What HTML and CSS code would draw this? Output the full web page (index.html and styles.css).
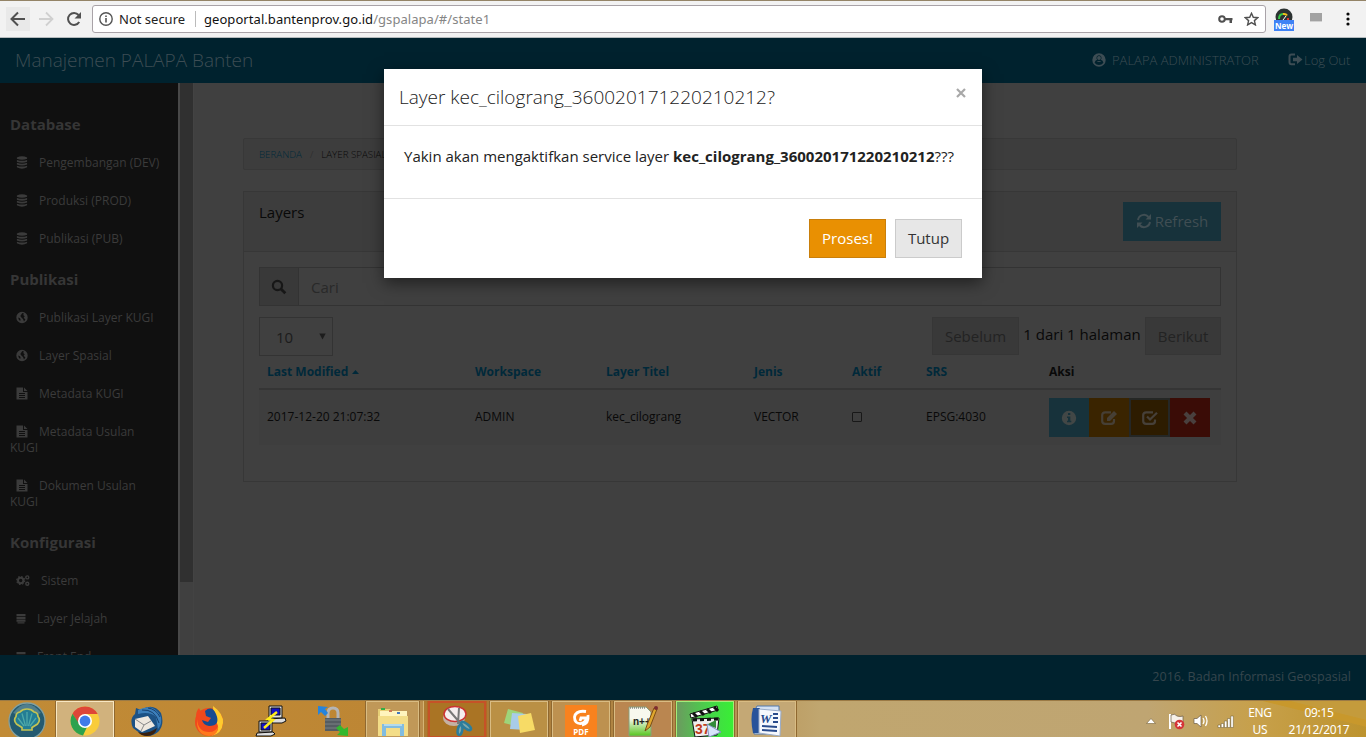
FILE: index.html
```html
<!DOCTYPE html>
<html lang="id">
<head>
<meta charset="utf-8">
<title>Manajemen PALAPA Banten</title>
<link rel="stylesheet" href="styles.css">
</head>
<body>
<svg class="defs" width="0" height="0">
  <symbol id="db" viewBox="0 0 12 14"><path d="M.5 1.600Q6-1.200 11.500 1.600V3Q6 5 .5 3zM.5 4.200Q6 6.200 11.500 4.200V6.200Q6 8.200.5 6.200zM.5 7.300Q6 9.300 11.500 7.300V9.200Q6 11.200.5 9.200zM.5 10.400Q6 12.400 11.500 10.400V12.200Q6 15 .5 12.200z"/></symbol>
  <symbol id="globe" viewBox="0 0 12 12"><path fill-rule="evenodd" d="M6 .3a5.700 5.700 0 1 0 0 11.400A5.700 5.700 0 0 0 6 .3zM6.300 1.500 8 2 7.200 3.400l1.500 1.300-1 1.500L9.400 8 8 10l-1-2.500-1.400-1.300L4.300 4.500zM2.200 6l1.800.8.600 1.500-.5 1.200Q2.300 8.200 2.200 6z"/></symbol>
  <symbol id="file" viewBox="0 0 12 13"><path fill-rule="evenodd" d="M.5.500h6.500v4.500h4.500V12.500H.500zM8 .5l3.500 3.500H8zM3 6v1h6V6zM3 8v1h6V8zM3 10v1h6v-1z"/></symbol>
  <symbol id="cogs" viewBox="0 0 14 12"><g fill="none" stroke="currentColor"><circle cx="4.700" cy="6" r="2.700" stroke-width="2"/><circle cx="4.700" cy="6" r="4" stroke-width="1.200" stroke-dasharray="1.600 1.540"/><circle cx="11.300" cy="2.900" r="1.500" stroke-width="1.400"/><circle cx="11.300" cy="9.200" r="1.500" stroke-width="1.400"/></g></symbol>
  <symbol id="stack" viewBox="0 0 10 12"><path d="M.5 1.500h9V3.600h-9zM.5 4.200h9v2.200h-9zM.5 7h9v2.200h-9zM1.500 9.800h7v1.200h-7z"/></symbol>
  <symbol id="edit" viewBox="0 0 18 16"><path fill="none" stroke="currentColor" stroke-width="2.200" d="M11 2.300H5.200Q2.200 2.300 2.200 5v6q0 2.800 3 2.800h6q2.800 0 2.800-2.800V9"/><path d="M7 11V8l7-7 3 3-7 7z"/></symbol>
  <symbol id="check" viewBox="0 0 18 16"><path fill="none" stroke="currentColor" stroke-width="2.200" d="M12 2.300H5.200Q2.200 2.300 2.200 5v6q0 2.800 3 2.800h6q2.800 0 2.800-2.800V9.500M6 6.500l3 3L16 2.700"/></symbol>
</svg>

<header class="browser">
  <div class="nav-btn hovered"><svg width="16" height="16" viewBox="0 0 16 16"><path d="M15 8H2M8 1.500 1.500 8 8 14.500" fill="none" stroke="#505050" stroke-width="2"/></svg></div>
  <div class="nav-btn"><svg width="16" height="16" viewBox="0 0 16 16"><path d="M1 8h13M8 1.500 14.500 8 8 14.500" fill="none" stroke="#d0d0d0" stroke-width="1.800"/></svg></div>
  <div class="nav-btn"><svg width="16" height="16" viewBox="0 0 16 16"><path d="M13.200 11A6 6 0 1 1 12.600 4" fill="none" stroke="#505050" stroke-width="2"/><path d="M15 1v6.500H8.500z" fill="#505050"/></svg></div>
  <div class="omnibox">
    <svg width="14" height="14" viewBox="0 0 14 14"><circle cx="7" cy="7" r="6.200" fill="none" stroke="#555" stroke-width="1.400"/><path d="M6.200 6h1.600v4.500H6.200zM6.200 3.400h1.600V5H6.200z" fill="#555"/></svg>
    <span class="secure">Not secure</span><i class="sep"></i><span class="url">geoportal.bantenprov.go.id<em>/gspalapa/#/state1</em></span>
    <svg class="key" width="15" height="10" viewBox="0 0 15 10"><circle cx="4" cy="5" r="2.800" fill="none" stroke="#505050" stroke-width="2"/><path d="M6.500 4h8v2.200H14V9h-2.500V6.200h-5z" fill="#505050"/></svg>
    <svg width="15" height="14" viewBox="0 0 15 14"><path d="m7.500 1.300 1.800 4 4.400.4-3.300 2.900 1 4.300-3.900-2.300-3.900 2.300 1-4.300L1.300 5.700l4.400-.4z" fill="none" stroke="#505050" stroke-width="1.400"/></svg>
  </div>
  <svg class="ext" width="20" height="23" viewBox="0 0 20 23"><circle cx="10" cy="9" r="8.500" fill="#2c3232"/><path d="M5 11Q5 6 9 6" stroke="#37c948" stroke-width="2" fill="none"/><path d="M9 6q3-.5 4 1.500" stroke="#f2c21c" stroke-width="2" fill="none"/><path d="m9 12 3-4" stroke="#fff"/><path d="M13 10h2v2h-2z" fill="#d33"/><path d="M0 12h20v11H0z" fill="#3f82f5"/><text x="10" y="20.500" text-anchor="middle" class="new">New</text></svg>
  <svg class="ext2" width="14" height="12" viewBox="0 0 14 12"><path d="M1 1h12v8H1z" fill="#a2a2a2"/><path d="M1 9h12v1H1z" fill="#d2d2d2"/></svg>
  <svg width="4" height="14" viewBox="0 0 4 14" fill="#555"><circle cx="2" cy="2" r="1.600"/><circle cx="2" cy="7" r="1.600"/><circle cx="2" cy="12" r="1.600"/></svg>
</header>

<nav class="navbar">
  <span class="brand">Manajemen PALAPA Banten</span>
  <span class="user"><svg width="14" height="14" viewBox="0 0 14 14"><path fill-rule="evenodd" d="M7 .3a6.700 6.700 0 1 0 0 13.400A6.700 6.700 0 0 0 7 .3zM7 2.200a2.500 2.700 0 0 1 1.900 4.500Q11 7.200 11.400 9.800 9.800 12 7 12T2.600 9.800Q3 7.200 5.100 6.700A2.500 2.700 0 0 1 7 2.200zM4.700 7.900Q5.700 9 7 9t2.300-1.100"/><ellipse cx="7" cy="5" rx="1.900" ry="2.100"/></svg>PALAPA ADMINISTRATOR</span>
  <span class="logout"><svg width="15" height="13" viewBox="0 0 15 13"><path d="M7 1.500H3.500q-2 0-2 2v5.800q0 2 2 2H7" fill="none" stroke="currentColor" stroke-width="2"/><path d="M5 4.700h4V2l5.500 4.500L9 11V8.300H5z"/></svg>Log Out</span>
</nav>

<main class="middle">
  <aside class="sidebar">
    <h4>Database</h4>
    <a><svg><use href="#db"/></svg>Pengembangan (DEV)</a>
    <a><svg><use href="#db"/></svg>Produksi (PROD)</a>
    <a><svg><use href="#db"/></svg>Publikasi (PUB)</a>
    <h4>Publikasi</h4>
    <a><svg><use href="#globe"/></svg>Publikasi Layer KUGI</a>
    <a><svg><use href="#globe"/></svg>Layer Spasial</a>
    <a><svg><use href="#file"/></svg>Metadata KUGI</a>
    <a><svg><use href="#file"/></svg>Metadata Usulan<br>KUGI</a>
    <a><svg><use href="#file"/></svg>Dokumen Usulan<br>KUGI</a>
    <h4>Konfigurasi</h4>
    <a class="wide"><svg><use href="#cogs"/></svg>Sistem</a>
    <a class="narrow"><svg><use href="#stack"/></svg>Layer Jelajah</a>
    <a class="narrow"><svg><use href="#stack"/></svg>Front End</a>
  </aside>
  <div class="scroll"><div class="thumb"></div></div>
  <section class="content">
    <div class="crumbs"><a>BERANDA</a><i>/</i><span>LAYER SPASIAL</span></div>
    <div class="panel">
      <div class="panel-head"><span>Layers</span>
        <button class="refresh"><svg width="16" height="16" viewBox="0 0 16 16"><path d="M2 7a6 6 0 0 1 10.500-3M14 9A6 6 0 0 1 3.500 12" fill="none" stroke="currentColor" stroke-width="2"/><path d="M15 1v5.500H9.500zM1 15V9.500h5.500z"/></svg>Refresh</button>
      </div>
      <div class="panel-body">
        <div class="search"><span class="addon"><svg width="16" height="16" viewBox="0 0 16 16"><circle cx="6.500" cy="6.500" r="4.600" fill="none" stroke="currentColor" stroke-width="2.200"/><path d="m10 10 4.300 4.300" stroke="currentColor" stroke-width="2.800"/></svg></span><span class="field">Cari</span></div>
        <div class="pager"><span class="select">10<svg width="7" height="7" viewBox="0 0 7 7"><path d="M.3.500h6.400L3.500 6.500z"/></svg></span>
          <span class="page off prev">Sebelum</span><span class="count">1 dari 1 halaman</span><span class="page off next">Berikut</span></div>
        <div class="row head"><span>Last Modified<svg class="caret" width="7" height="4" viewBox="0 0 7 4"><path d="M0 4 3.500 0 7 4z"/></svg></span><span>Workspace</span><span>Layer Titel</span><span>Jenis</span><span>Aktif</span><span>SRS</span><span class="dark">Aksi</span></div>
        <div class="row data"><span>2017-12-20 21:07:32</span><span>ADMIN</span><span>kec_cilograng</span><span>VECTOR</span><span><i class="box"></i></span><span>EPSG:4030</span>
          <span class="actions"><b class="info"><svg width="16" height="16" viewBox="0 0 16 16"><path fill-rule="evenodd" d="M8 .8a7.200 7.200 0 1 0 0 14.400A7.200 7.200 0 0 0 8 .8zM7 3h2.300v2H7zM6 6.500h3.300v4.300h1V12.300H6v-1.500h1V8H6z"/></svg></b><b class="warn"><svg width="18" height="16"><use href="#edit"/></svg></b><b class="active"><svg width="18" height="16"><use href="#check"/></svg></b><b class="danger"><svg width="14" height="14" viewBox="0 0 14 14"><path d="m2 2 10 10M12 2 2 12" stroke="currentColor" stroke-width="4.200"/></svg></b></span></div>
      </div>
    </div>
  </section>
</main>
<footer class="footer">2016. Badan Informasi Geospasial</footer>

<div class="taskbar">
  <div class="start"><svg width="38" height="37" viewBox="0 0 38 37"><circle cx="19" cy="20" r="18" fill="#245a70" stroke="#83a0a0" stroke-width="1.300"/><path d="M5 12Q19-6 33 12Q19 19 5 12z" fill="#6f97a0" opacity=".6"/><path d="M14 29v-2.500L8.500 23Q5 19 8 15.500q0-4 4-4.500 2.500-3 7-3t7 3q4 .5 4 4.500 3 3.500-.5 7.500L24 26.500V29z" fill="#237d94" stroke="#c4c352" stroke-width="1.700"/><path d="M16 25 10 17M17.500 25 14 12.500M19 25V11M20.500 25 24 12.500M22 25l6-8" stroke="#4fa9a8" stroke-width="1.300"/></svg></div>
  <div class="task chrome"><svg width="32" height="32" viewBox="0 0 32 32"><circle cx="16" cy="16" r="14.500" fill="#f9cc3b"/><path d="M3.500 8.700A14.500 14.500 0 0 1 28.700 9H16L9.500 19z" fill="#de4638"/><path d="M3.500 8.700 11 20l7 2-4 8.400A14.500 14.500 0 0 1 3.500 8.700z" fill="#2da24e"/><circle cx="16" cy="16" r="7" fill="#fff"/><circle cx="16" cy="16" r="5.400" fill="#407be9"/></svg></div>
  <div class="task bare"><svg width="34" height="32" viewBox="0 0 34 32"><path d="M3 23Q-1 14 5 9l1-6 5 2Q23-3 31 8q4 12-3 19-9 7-17 2z" fill="#1c5285"/><path d="M8 5Q24-3 31 12q1 8-3 12l-2-12q-6-6-18-3z" fill="#3c7fba"/><path d="M12 5q13-1 17 13M18 3q8 1 12 9" fill="none" stroke="#173f6c"/><path d="m5 14 13-3 7 10-13 6-7-5z" fill="#eee8df"/><path d="m5 14 9 6 7-4M14 20l-3 6" fill="none" stroke="#888"/><path d="M8 27q9 3 19-4-2 8-10 8-6 0-9-4z" fill="#39200f"/></svg></div>
  <div class="task bare"><svg width="32" height="32" viewBox="0 0 32 32"><circle cx="16" cy="17" r="14" fill="#f2491d"/><path d="M3 12q0-6 3-9l2 4 4 0-5 9z" fill="#f2491d"/><path d="M20 1q11 8 10 17-1 11-12 13 11-6 5-14-3-3-6-5 4-4 3-11z" fill="#ffcb2e"/><path d="M12 6q7-6 11 3 5 12-7 12-6-1-7-6l6 2 3-4-5-2z" fill="#174b92"/><path d="M4 14q1 13 12 13 7 0 9-6 1 9-9 10Q3 30 4 14z" fill="#ff7a1c"/></svg></div>
  <div class="task bare"><svg width="32" height="32" viewBox="0 0 32 32" stroke="#111"><path d="M14 1h13v12H14z" fill="#ddd"/><path d="M16 3h9v7h-9z" fill="#1010c5"/><path d="m13 14 17-1 1 3-4 2H12z" fill="#ddd"/><path d="M4 16h13v11H4z" fill="#ddd"/><path d="M6 18h9v7H6z" fill="#1010c5"/><path d="m2 28 16-1 2 2-4 2H1z" fill="#ddd"/><path d="m22 7-9 7 5 1-9 8" fill="none" stroke="#ffed19" stroke-width="2.500"/></svg></div>
  <div class="task bare"><svg width="32" height="32" viewBox="0 0 32 32"><path d="M11 14V8q0-5 5-5t5 5v6" fill="none" stroke="#b4b4b4" stroke-width="3"/><path d="M8 13h16v13H8z" fill="#555d62"/><path d="M8 15h16M8 19h16M8 23h16" stroke="#7b8183"/><path d="m1 1 10 1-3 2 3 4-3 3-4-4-3 3z" fill="#2684dc"/><path d="m31 31-11-1 3-3-4-4 4-3 4 4 4-2z" fill="#32b82d"/></svg></div>
  <div class="task explorer"><svg width="34" height="32" viewBox="0 0 34 32"><path d="M2 4h12l2 3h14v24H2z" fill="#e7cf76"/><path d="M4 6h27v5H4z" fill="#fff4bd"/><path d="M2 11h30v20H2z" fill="#f3dd88"/><path d="M5 3h4v2H5z" fill="#33ae45"/><path d="M13 5h3v2h-3z" fill="#c75"/><path d="M21 7h3v2h-3z" fill="#47b"/><path d="M8 31V21h18v10" fill="none" stroke="#81bce0" stroke-width="4"/><path d="M8 20h18" stroke="#c4e5f0" stroke-width="1.500"/></svg></div>
  <div class="task snip"><svg width="32" height="32" viewBox="0 0 32 32"><ellipse cx="13" cy="13" rx="11" ry="8" fill="#c5b1a3"/><ellipse cx="14" cy="9" rx="11" ry="7.500" fill="#f5eeee" stroke="#c33" stroke-width="1.500"/><path d="m7 4 13 15M18 3l-1 16" stroke="#777" stroke-width="2"/><ellipse cx="25" cy="21" rx="6" ry="2.300" transform="rotate(38 25 21)" fill="#7fa9ac" stroke="#2c7d9c" stroke-width="2.500"/><ellipse cx="19" cy="25" rx="2.300" ry="5" transform="rotate(10 19 25)" fill="#7fa9ac" stroke="#2c7d9c" stroke-width="2.500"/></svg></div>
  <div class="task sticky"><svg width="32" height="32" viewBox="0 0 32 32"><path d="m5 4 15 4-4 14-15-4z" fill="#9ed47a"/><path d="m9 8 15 1-1 16-16-1z" fill="#a8cce8"/><path d="m15 11 13-3 4 17-15 3z" fill="#f7db66"/></svg></div>
  <div class="task foxit"><svg width="32" height="32" viewBox="0 0 32 32"><path d="M0 0h32v32H0z" fill="#f8821e"/><path d="M21 6.500Q11 5 9.500 12q0 7 6.500 6.500 5-1 5.500-5.500H16l-1 3M17 20q7-1 6-10" fill="none" stroke="#fff" stroke-width="2.800"/><text x="16" y="30" text-anchor="middle" class="pdf">PDF</text></svg></div>
  <div class="task npp"><svg width="32" height="32" viewBox="0 0 32 32"><defs><linearGradient id="g" x2="0" y2="1"><stop offset=".4" stop-color="#f8f8ee"/><stop offset="1" stop-color="#55c51c"/></linearGradient></defs><path d="M2 2h17l5 5v24H2z" fill="url(#g)" stroke="#8a9d7a"/><path d="M3 3h15" stroke="#555" stroke-dasharray="1 1"/><text x="6" y="20" class="plus">n++</text><path d="m18 26 2-6L27 3l3 1-7 18z" fill="#dfa72d" stroke="#7b4c14"/><circle cx="29" cy="3" r="2" fill="#7e2d30"/></svg></div>
  <div class="task mpc"><svg width="32" height="34" viewBox="0 0 32 34"><path d="m1 9 27-8 1 4L2 13z" fill="#fff" stroke="#111"/><path d="m4 8 4 4M11 6l4 4M18 4l4 4M25 2l4 4" stroke="#111" stroke-width="3"/><path d="m3 14 27-1-2 17-22 2z" fill="#eee" stroke="#111"/><path d="m4 15 25-1" stroke="#111" stroke-width="3" stroke-dasharray="4 3"/><text x="6" y="29" class="cal">37</text><path d="m17 20 10-5v8z" fill="#338b3a"/><path d="m18 19 14 8-12 5z" fill="#d7e4fa" stroke="#8192bf"/></svg></div>
  <div class="task word"><svg width="32" height="32" viewBox="0 0 32 32"><path d="M6 1h22v28H3V7z" fill="#d4e1f2" stroke="#5278aa"/><path d="M2 3h7v25H2Q-1 14 2 3z" fill="#28539a"/><path d="m8 4 22 2-1 25-21-3z" fill="#f5f8fd" stroke="#99abc8"/><text x="9" y="18" class="w">W</text><path d="M22 9h5M22 13h5M22 17h5M11 21l15 1M11 25l15 1" stroke="#294b8c" stroke-width="1.800"/></svg></div>
  <div class="tray">
    <svg width="10" height="6" viewBox="0 0 10 6"><path d="m.5 5.500 4.500-5 4.500 5z" fill="#fff" stroke="#776339" stroke-width=".6"/></svg>
    <svg width="17" height="17" viewBox="0 0 17 17"><path d="M2 1v15" stroke="#fff" stroke-width="2"/><path d="M3 2q4-2 6 1 3 1 6 0v8q-6 0-12-2z" fill="#f6f1e9" stroke="#6b5b46" stroke-width=".7"/><circle cx="11.500" cy="11.500" r="4.800" fill="#d53538"/><path d="m9.500 9.500 4 4M13.500 9.500l-4 4" stroke="#fff" stroke-width="1.600"/></svg>
    <svg width="16" height="14" viewBox="0 0 16 14"><path d="M1 4.500h3L8 1v12L4 9.500H1z" fill="#fff" stroke="#6b5b46" stroke-width=".7"/><path d="M10 4q2 3 0 6M12.500 2q3 5 0 10" fill="none" stroke="#fff" stroke-width="1.300"/></svg>
    <svg width="17" height="13" viewBox="0 0 17 13"><path d="M1 10h2.500v2.500H1zM4.200 8.500h2.500v4H4.200zM7.400 6h2.500v6.500H7.400zM10.600 3.500h2.500v9h-2.500zM13.800 1h2.500v11.500h-2.500z" fill="#fff" stroke="#66552b" stroke-width=".5"/></svg>
    <div class="lang">ENG<br>US</div><div class="clock">09:15<br>21/12/2017</div>
  </div>
</div>

<div class="modal">
  <div class="modal-head"><span>Layer kec_cilograng_360020171220210212?</span><svg width="10" height="10" viewBox="0 0 10 10"><path d="m1 1 8 8M9 1 1 9" stroke="#a8a8a8" stroke-width="2.200"/></svg></div>
  <div class="modal-body"><p>Yakin akan mengaktifkan service layer <b>kec_cilograng_360020171220210212</b>???</p></div>
  <div class="modal-foot"><button class="go">Proses!</button><button class="close">Tutup</button></div>
</div>
</body>
</html>
```
FILE: styles.css
```css
* { box-sizing: border-box; }
body { margin: 0; width: 1366px; height: 737px; overflow: hidden; display: flex; flex-direction: column; position: relative; font-family: "Open Sans", sans-serif; font-size: 15px; background: #404040; color: #090909; white-space: nowrap; }
svg { flex: none; fill: currentColor; }
.defs { position: absolute; }
button { font: inherit; padding: 0 0 2px; border-radius: 0; }
i, em { font-style: normal; }

/* browser toolbar */
.browser { height: 38px; flex: none; display: flex; align-items: center; background: #f2f2f2; border-top: 1px solid #948467; border-bottom: 1px solid #b5bbbd; padding: 0 0 0 6px; font-family: "Noto Sans", sans-serif; font-size: 13px; }
.nav-btn { width: 24px; height: 24px; flex: none; margin-right: 4px; display: flex; align-items: center; justify-content: center; }
.hovered { background: #e9e9e9; }
.omnibox { width: 1174px; flex: none; height: 28px; margin-left: 2px; border: 1px solid #a9a3a8; border-radius: 3px; background: #fff; display: flex; align-items: center; padding: 0 6px; color: #222; }
.secure { margin-left: 6px; width: 68px; }
.sep { width: 1px; height: 16px; background: #bbb; margin: 0 8px 0 8px; }
.url { flex: 1; color: #111; letter-spacing: .06px; }
.url em { color: #858585; }
.key { margin-right: 11px; }
.ext { margin-left: 8px; }
.ext2 { margin: 0 23px 3px 15px; }
.new { font: bold 8px "Open Sans", sans-serif; fill: #fff; }

.navbar { height: 45px; flex: none; background: #00222e; color: #3d4d54; display: flex; align-items: center; padding: 0 15px 2px; font-size: 13px; font-weight: 300; }
.brand { font-size: 19px; flex: 1; }
.user { display: flex; align-items: center; gap: 6px; width: 196px; }
.logout { display: flex; align-items: center; gap: 1px; width: 63px; }

.middle { height: 572px; flex: none; display: flex; overflow: hidden; }
.sidebar { width: 178px; flex: none; background: #101010; color: #3b3b3b; padding-top: 19px; overflow: hidden; font-size: 12px; line-height: 16px; }
.sidebar h4 { margin: 0; height: 41px; padding: 14px 10px 0; line-height: 16px; font-size: 15px; font-weight: 700; color: #363636; }
.sidebar a { display: block; padding: 12px 10px 10px; }
.sidebar svg { width: 12px; height: 13px; margin: 0 11px 0 6px; vertical-align: -2px; }
.sidebar .wide svg { width: 14px; }
.sidebar .narrow svg { width: 10px; }
.scroll { width: 16px; flex: none; background: #404040; border-left: 2px solid #484848; border-right: 1px solid #434343; }
.thumb { height: 499px; background: #303030; }

.content { width: 994px; margin: 55px 0 0 49px; }
.crumbs { height: 32px; border: 1px solid #383838; background: #3d3d3d; border-radius: 2px; display: flex; align-items: center; padding-left: 15px; font-size: 9.750px; font-weight: 300; }
.crumbs a { color: #00293a; }
.crumbs i { margin: 0 8px; color: #292929; }
.panel { height: 291px; margin-top: 21px; border: 1px solid #373737; }
.panel-head { height: 60px; background: #3d3d3d; border-bottom: 1px solid #373737; padding: 10px 15px 0; display: flex; justify-content: space-between; line-height: 20px; }
.refresh { width: 98px; height: 39px; background: #17323b; border: 0; color: #404e53; display: flex; align-items: center; justify-content: center; gap: 3px; }
.panel-body { padding: 15px 15px 0; }
.search { height: 39px; display: flex; border: 1px solid #333; }
.addon { width: 39px; background: #393939; border-right: 1px solid #333; display: flex; align-items: center; justify-content: center; color: #171717; }
.field { padding-left: 12px; line-height: 38px; color: #292929; }
.pager { height: 39px; margin-top: 11px; display: flex; }
.select { width: 74px; border: 1px solid #333; padding: 0 6px 0 16px; line-height: 38px; display: flex; justify-content: space-between; align-items: center; color: #1c1c1c; }
.page { height: 38px; line-height: 36px; background: #393939; border: 1px solid #363636; text-align: center; color: #232323; }
.prev { width: 87px; margin-left: auto; }
.next { width: 76px; }
.count { width: 126px; text-align: center; line-height: 34px; }
.row { display: grid; grid-template-columns: 208px 131px 148px 98px 74px 123px 1fr; font-size: 12px; align-items: center; }
.row > span { padding-left: 8px; }
.head { height: 34px; font-weight: 700; color: #00293a; border-bottom: 2px solid #353535; padding-bottom: 1px; }
.head .dark { color: #090909; }
.caret { margin: 0 0 2px 4px; }
.data { height: 55px; background: #3e3e3e; }
.data > span { padding-bottom: 2px; }
.box { display: block; width: 10px; height: 10px; border: 1px solid #181818; border-radius: 1px; }
.data > .actions { display: flex; padding-bottom: 0; }
.actions b { width: 40px; height: 39px; display: flex; align-items: center; justify-content: center; color: #424746; }
.actions .info { background: #17323b; }
.actions .warn { background: #3a2400; color: #463f35; }
.actions .active { width: 41px; background: #2d1c00; border: 2px solid #252725; color: #464039; }
.actions .danger { background: #3a0c06; color: #49403e; }

.footer { height: 45px; flex: none; background: #00222e; color: #36464d; text-align: right; line-height: 44px; padding-right: 15px; font-size: 12.550px; }

/* desktop taskbar */
.taskbar { height: 37px; flex: none; display: flex; gap: 4px; overflow: hidden; background: linear-gradient(90deg, #c18b36, #bd8634 28%, #a87832 32%, #b48b4c 52%, #c0a66f 60%, #bfa572 84%, #c7a04a 92%, #bd932e); border-top: 1px solid #9b7a45; }
.start { width: 52px; flex: none; padding-left: 8px; }
.task { width: 58px; height: 37px; flex: none; border: 1px solid #d9bc83; border-bottom: 0; background: #c09858; outline: 1px solid #8f6830; display: flex; justify-content: center; padding-top: 3px; }
.bare { border-color: transparent; background: none; outline: 0; }
.chrome { background: #d1b27d; border-color: #f8e7c2; }
.explorer { width: 53px; margin-right: 5px; box-shadow: 4px 0 #b98d4c, 5px 0 #d5b474; }
.snip { background: #aa7424; border: 2px solid #c65227; outline-color: #b16a24; padding-top: 2px; }
.sticky { background: #ba9045; }
.foxit { background: #bd9150; }
.npp { background: #ba8650; }
.mpc { background: linear-gradient(90deg, #6b9b5f, #45d748 60%, #39ee35); border-color: #a3ed7a; }
.word { background: #c4a875; }
.pdf { font: bold 8px "Open Sans", sans-serif; fill: #fff; }
.plus { font: bold 10px "Liberation Sans", sans-serif; fill: #222; }
.cal { font: bold 14px "Liberation Sans", sans-serif; fill: #c03c1c; }
.w { font: italic bold 13px "Liberation Serif", serif; fill: #24488c; }
.tray { flex: 1; display: flex; align-items: center; justify-content: flex-end; height: 40px; color: #fff; background: linear-gradient(14deg, transparent 70%, #c8982c 71% 78%, #c49b3c 79%) right / 190px 40px no-repeat; font: 12px/17px "Noto Sans", sans-serif; text-align: center; gap: 8px; padding-right: 14px; }
.tray > svg:first-child { margin-right: 4px; }
.lang { width: 36px; margin: 0; letter-spacing: -.3px; }
.clock { width: 66px; letter-spacing: -.3px; }

.modal { position: absolute; left: 384px; top: 69px; width: 598px; height: 209px; background: #fff; box-shadow: 0 5px 15px rgba(0, 0, 0, .5); color: #222; }
.modal-head { height: 57px; border-bottom: 1px solid #e2e2e2; padding: 0 16px 0 15px; display: flex; align-items: center; justify-content: space-between; font-size: 19px; font-weight: 300; }
.modal-head svg { margin-bottom: 9px; }
.modal-body { height: 73px; border-bottom: 1px solid #e2e2e2; padding: 19px 20px; line-height: 22px; }
.modal-body p { margin: 0; }
.modal-foot { padding: 20px; display: flex; justify-content: flex-end; gap: 9px; }
.modal-foot button { height: 39px; border: 1px solid #cbcbcb; background: #e7e7e7; color: #333; width: 67px; }
.modal-foot .go { width: 77px; background: #e99002; border-color: #c97f0b; color: #fff; }
```
